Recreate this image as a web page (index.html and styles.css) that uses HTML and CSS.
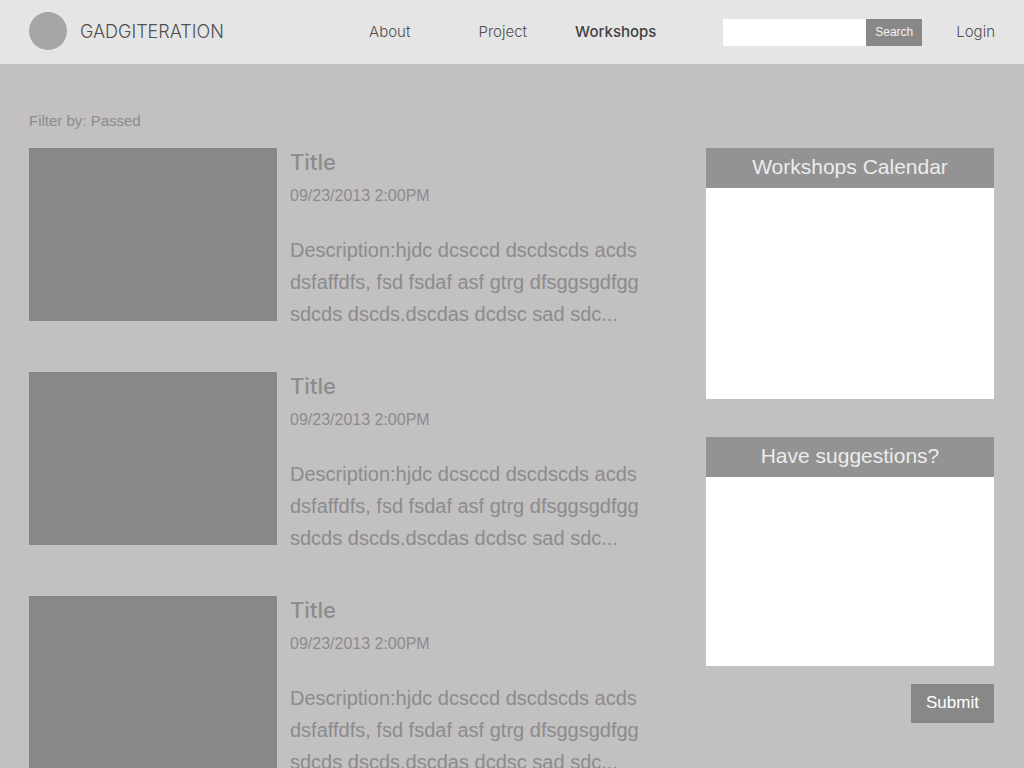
FILE: index.html
```html
<!DOCTYPE html>
<html lang="en">
<head>
<meta charset="utf-8">
<meta name="viewport" content="width=device-width, initial-scale=1">
<title>Gadgiteration – Workshops</title>
<link rel="stylesheet" href="styles.css">
</head>
<body>
<header class="site-header">
  <a class="brand" href="#"><span class="brand-mark"></span><span>GADGITERATION</span></a>
  <nav class="main-nav" aria-label="Main">
    <a href="#">About</a>
    <a href="#">Project</a>
    <a class="current" href="#" aria-current="page">Workshops</a>
  </nav>
  <form class="search" role="search">
    <input class="search-input" type="search" aria-label="Search workshops">
    <button class="search-button" type="submit">Search</button>
  </form>
  <a class="login" href="#">Login</a>
</header>
<main class="page">
  <section class="listing">
    <p class="filter">Filter by: Passed</p>
    <div class="workshops">
      <article class="workshop">
        <div class="thumb"></div>
        <div class="details">
          <h2 class="title">Title</h2>
          <time class="date" datetime="2013-09-23T14:00">09/23/2013 2:00PM</time>
          <p class="description">Description:hjdc dcsccd dscdscds acds dsfaffdfs, fsd fsdaf asf gtrg dfsggsgdfgg sdcds dscds.dscdas dcdsc sad sdc...</p>
        </div>
      </article>
      <article class="workshop">
        <div class="thumb"></div>
        <div class="details">
          <h2 class="title">Title</h2>
          <time class="date" datetime="2013-09-23T14:00">09/23/2013 2:00PM</time>
          <p class="description">Description:hjdc dcsccd dscdscds acds dsfaffdfs, fsd fsdaf asf gtrg dfsggsgdfgg sdcds dscds.dscdas dcdsc sad sdc...</p>
        </div>
      </article>
      <article class="workshop">
        <div class="thumb"></div>
        <div class="details">
          <h2 class="title">Title</h2>
          <time class="date" datetime="2013-09-23T14:00">09/23/2013 2:00PM</time>
          <p class="description">Description:hjdc dcsccd dscdscds acds dsfaffdfs, fsd fsdaf asf gtrg dfsggsgdfgg sdcds dscds.dscdas dcdsc sad sdc...</p>
        </div>
      </article>
    </div>
  </section>
  <aside class="sidebar">
    <section class="panel">
      <h2 class="panel-title">Workshops Calendar</h2>
      <div class="calendar"></div>
    </section>
    <form class="panel">
      <label class="panel-title" for="suggestion">Have suggestions?</label>
      <textarea class="suggestion" id="suggestion"></textarea>
      <button class="submit" type="submit">Submit</button>
    </form>
  </aside>
</main>
</body>
</html>
```
FILE: styles.css
```css
* { box-sizing: border-box; }

body {
  margin: 0;
  background: #c2c0c1;
  color: #8c8c8c;
  font-family: "Liberation Sans", Arial, sans-serif;
}

h2, p { margin: 0; }
a { color: inherit; text-decoration: none; }
button, input, textarea { font: inherit; border: 0; border-radius: 0; }

.site-header {
  display: flex;
  align-items: center;
  height: 64px;
  padding: 0 29px;
  background: #e5e5e5;
  color: #505050;
  font-family: Inter, "Liberation Sans", sans-serif;
  font-size: 15px;
  font-weight: 300;
}

.brand, .main-nav, .login { padding-bottom: 2px; }

.brand {
  display: flex;
  align-items: center;
  gap: 13px;
  font-size: 18px;
}

.brand-mark {
  width: 38px;
  height: 38px;
  border-radius: 50%;
  background: #a6a6a6;
}

.main-nav {
  display: grid;
  flex: 1;
  grid-template-columns: repeat(3, 113px);
  justify-content: end;
  margin-right: 51px;
  text-align: center;
}

.main-nav .current { color: #404040; font-weight: 500; }

.search { display: flex; height: 27px; }

.search-input {
  width: 143px;
  padding: 0 8px;
  background: #fff;
}

.search-button {
  width: 56px;
  padding: 0;
  background: #888;
  color: #f4f4f4;
  font-family: "Liberation Sans", Arial, sans-serif;
  font-size: 12px;
  font-weight: 400;
}

.login { margin-left: 34px; }

.page {
  display: grid;
  grid-template-columns: 1fr 288px;
  gap: 56px;
  padding: 48px 30px 0 29px;
}

.filter {
  margin-bottom: 18px;
  font-size: 15px;
  line-height: 18px;
}

.workshops { display: grid; gap: 42px; }

.workshop {
  display: grid;
  grid-template-columns: 248px 1fr;
  gap: 13px;
}

.thumb { height: 173px; background: #888; }

.title {
  font-family: Inter, "Liberation Sans", sans-serif;
  font-size: 22px;
  font-weight: 500;
  line-height: 28px;
}

.date {
  display: block;
  margin: 8px 0 26px;
  font-size: 16px;
  line-height: 24px;
}

.description { font-size: 20px; line-height: 32px; }

.sidebar {
  display: grid;
  align-content: start;
  gap: 38px;
  padding-top: 36px;
}

.panel { display: flex; flex-direction: column; }

.panel-title {
  padding-bottom: 2px;
  background: #939393;
  color: #ececec;
  font-size: 21px;
  font-weight: 400;
  line-height: 38px;
  text-align: center;
}

.calendar { height: 211px; background: #fff; }

.suggestion {
  height: 189px;
  padding: 8px;
  background: #fff;
  resize: none;
}

.submit {
  align-self: flex-end;
  width: 83px;
  height: 39px;
  margin-top: 18px;
  padding: 0 0 2px;
  background: #888;
  color: #fff;
  font-size: 17px;
}
```
